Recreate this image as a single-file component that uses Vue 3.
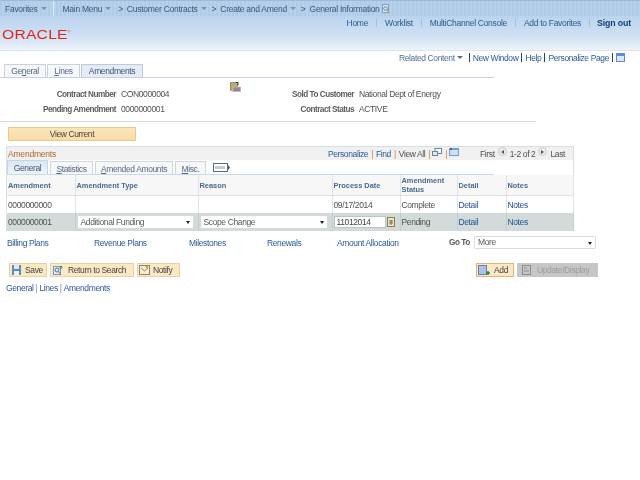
<script setup>
const menu = [
  { label: 'Main Menu', arrow: false },
  { label: 'Customer Contracts', arrow: true },
  { label: 'Create and Amend', arrow: true }
]
const topLinks = ['Home', 'Worklist', 'MultiChannel Console', 'Add to Favorites']
const pageTabs = [
  { pre: 'Ge', key: 'n', post: 'eral', w: 42 },
  { pre: '', key: 'L', post: 'ines', w: 33 },
  { pre: 'Amendments', key: '', post: '', w: 62, active: true }
]
const gridTabs = [
  { pre: 'General', key: '', post: '', w: 41, active: true },
  { pre: '', key: 'S', post: 'tatistics', w: 43 },
  { pre: '', key: 'A', post: 'mended Amounts', w: 78 },
  { pre: '', key: 'M', post: 'isc.', w: 31 }
]
const relatedLinks = ['Billing Plans', 'Revenue Plans', 'Milestones', 'Renewals', 'Amount Allocation']
</script>

<template>
  <div class="page">
    <header class="banner">
      <nav class="crumbs">
        <span class="crumb fav">Favorites<i class="caret"></i></span>
        <span class="crumb-sep"></span>
        <span v-for="m in menu" :key="m.label" class="crumb">
          <span v-if="m.arrow" class="gt">&gt;</span>{{ m.label }}<i class="caret"></i>
        </span>
        <span class="crumb last"><span class="gt">&gt;</span>General Information</span>
        <svg class="crumb-icon" width="8" height="10" viewBox="0 0 8 10">
          <rect x="0.5" y="0.5" width="6" height="8" fill="#dfe9f5" stroke="#7f9fc4" />
          <circle cx="3.5" cy="4.5" r="1.8" fill="none" stroke="#5f7fa8" />
          <path d="M5 6 L7.5 9.5" stroke="#c8a038" stroke-width="1.2" />
        </svg>
      </nav>
      <div class="toplinks">
        <template v-for="l in topLinks" :key="l">
          <a class="toplink">{{ l }}</a>
          <span class="top-sep"></span>
        </template>
        <a class="toplink signout">Sign out</a>
      </div>
      <div class="logo">ORACLE<sup>®</sup></div>
    </header>

    <div class="actions">
      <span class="related">Related Content<i class="caret dark"></i></span>
      <span class="pipe first"></span><a>New Window</a>
      <span class="pipe"></span><a>Help</a>
      <span class="pipe"></span><a>Personalize Page</a>
      <span class="pipe"></span>
      <svg width="9" height="9" viewBox="0 0 9 9" class="cal">
        <rect width="9" height="9" fill="#5b8fd0" />
        <rect x="1" y="3" width="7" height="5" fill="#dbe7f5" />
      </svg>
    </div>

    <div class="tabs page-tabs">
      <span v-for="t in pageTabs" :key="t.post + t.pre" class="tab" :class="{ active: t.active }" :style="{ width: t.w + 'px' }">{{ t.pre }}<u v-if="t.key">{{ t.key }}</u>{{ t.post }}</span>
    </div>

    <section class="summary">
      <div class="summary-row">
        <label class="lbl l1">Contract Number</label><span class="val v1">CON0000004</span>
        <span class="slot">
          <svg class="doc-icon" width="11" height="10" viewBox="0 0 11 10">
            <rect x="0.3" y="0.3" width="7" height="8" fill="#b7ad70" stroke="#77714a" stroke-width="0.6" />
            <rect x="3" y="5" width="7.7" height="4.7" fill="#8c8c8c" stroke="#ecaab6" stroke-width="0.8" />
            <path d="M6 0.5 h2 v3" fill="none" stroke="#333" />
          </svg>
        </span>
        <label class="lbl l2">Sold To Customer</label><span class="val">National Dept of Energy</span>
      </div>
      <div class="summary-row">
        <label class="lbl l1">Pending Amendment</label><span class="val v1">0000000001</span>
        <span class="slot"></span>
        <label class="lbl l2">Contract Status</label><span class="val">ACTIVE</span>
      </div>
    </section>

    <div class="rule"></div>

    <button class="view-current">View Current</button>

    <section class="grid-box">
      <div class="grid-head">
        <span class="grid-title">Amendments</span>
        <div class="grid-nav">
          <a>Personalize</a><span class="or">|</span><a>Find</a><span class="or">|</span><span class="muted">View All</span><span class="or">|</span>
          <svg width="10" height="8" viewBox="0 0 10 8" class="mini">
            <rect x="3" y="0.5" width="6.5" height="5" fill="#fff" stroke="#6f8296" />
            <rect x="0.5" y="3.5" width="5" height="4" fill="#dfe8f1" stroke="#6f8296" />
          </svg>
          <span class="or">|</span>
          <svg width="10" height="8" viewBox="0 0 10 8" class="mini">
            <rect width="10" height="8" fill="#6aa2db" />
            <rect x="1" y="2" width="8" height="5" fill="#cfe0f2" />
            <rect x="1" y="0" width="2" height="2" fill="#c0392b" />
          </svg>
          <span class="first-last f">First</span>
          <span class="round"><i class="tri left"></i></span>
          <span class="muted">1-2 of 2</span>
          <span class="round"><i class="tri right"></i></span>
          <span class="first-last">Last</span>
        </div>
      </div>

      <div class="grid-tabs">
        <span v-for="t in gridTabs" :key="t.post + t.pre" class="gtab" :class="{ active: t.active }" :style="{ width: t.w + 'px' }">{{ t.pre }}<u v-if="t.key">{{ t.key }}</u>{{ t.post }}</span>
        <svg class="show-all" width="17" height="9" viewBox="0 0 17 9">
          <rect x="0.5" y="0.5" width="14" height="8" fill="#fff" stroke="#5b6b80" />
          <path d="M3 3v3M5 3v3M7 3v3M9 3v3M11 3v3" stroke="#8a97a8" />
          <path d="M15 2 L17 4.5 L15 7z" fill="#44556b" />
        </svg>
      </div>

      <table class="grid">
        <colgroup>
          <col style="width: 68px" /><col style="width: 123px" /><col style="width: 134px" />
          <col style="width: 68px" /><col style="width: 57px" /><col style="width: 49px" /><col style="width: 67px" />
        </colgroup>
        <thead>
          <tr>
            <th>Amendment</th><th>Amendment Type</th><th>Reason</th><th>Process Date</th><th>Amendment<br />Status</th><th>Detail</th><th>Notes</th>
          </tr>
        </thead>
        <tbody>
          <tr class="odd">
            <td>0000000000</td><td></td><td></td><td>09/17/2014</td><td>Complete</td><td class="link">Detail</td><td class="link">Notes</td>
          </tr>
          <tr class="even">
            <td>0000000001</td>
            <td><span class="select w115">Additional Funding<i class="drop"></i></span></td>
            <td><span class="select w126">Scope Change<i class="drop"></i></span></td>
            <td>
              <div class="date-cell">
                <span class="date-input">11012014</span>
                <svg width="8" height="10" viewBox="0 0 8 10">
                  <rect x="0.5" y="0.5" width="7" height="9" fill="#efe3b8" stroke="#8b7f4f" />
                  <path d="M2 4h4M2 6h4M4 3v5" stroke="#5d5d5d" stroke-width="0.8" />
                </svg>
              </div>
            </td>
            <td>Pending</td><td class="link">Detail</td><td class="link">Notes</td>
          </tr>
        </tbody>
      </table>
    </section>

    <div class="related-row">
      <a v-for="l in relatedLinks" :key="l" class="rel-link">{{ l }}</a>
      <label class="goto">Go To</label>
      <span class="select more">More<i class="drop"></i></span>
    </div>

    <div class="toolbar">
      <button class="btn b-save">
        <svg width="9" height="10" viewBox="0 0 9 10">
          <rect width="9" height="10" fill="#5b8bc9" />
          <rect x="2" y="0" width="5" height="4" fill="#dfe9f5" />
          <rect x="2" y="6" width="5" height="4" fill="#eef3f9" />
        </svg>
        Save
      </button>
      <button class="btn b-return">
        <svg width="12" height="11" viewBox="0 0 12 11">
          <rect x="0.5" y="1.5" width="7" height="8" fill="#e5edf6" stroke="#7c99bd" />
          <circle cx="4" cy="5" r="2" fill="none" stroke="#4f6f99" />
          <path d="M5.5 6.5 L8 10" stroke="#777" />
          <path d="M8 4 V1 M6.5 2.5 L8 1 L9.5 2.5" fill="none" stroke="#2f8a3a" />
        </svg>
        Return to Search
      </button>
      <button class="btn b-notify">
        <svg width="11" height="10" viewBox="0 0 11 10">
          <rect x="0.5" y="0.5" width="10" height="9" fill="#f7efd8" stroke="#8d8360" />
          <path d="M2 3l3.5 3L9 3" fill="none" stroke="#8d8360" />
          <rect x="7" y="1" width="2" height="2" fill="#c9a13a" />
        </svg>
        Notify
      </button>
      <span class="spacer"></span>
      <button class="btn b-add">
        <svg width="13" height="11" viewBox="0 0 13 11">
          <rect x="0.5" y="0.5" width="8" height="9" fill="#a9c3e3" stroke="#5b84b8" />
          <path d="M10 6v4M8 8h4" stroke="#1f8a2c" stroke-width="1.4" />
        </svg>
        Add
      </button>
      <button class="btn b-update">
        <svg width="9" height="10" viewBox="0 0 9 10">
          <rect x="0.5" y="0.5" width="8" height="9" fill="none" stroke="#8d8d8d" />
          <path d="M2 3h3M2 6h5" stroke="#8d8d8d" />
        </svg>
        Update/Display
      </button>
    </div>

    <div class="footer-links">
      <a>General</a><span class="bar">|</span><a>Lines</a><span class="bar">|</span><a>Amendments</a>
    </div>
  </div>
</template>

<style scoped>
.page {
  width: 640px;
  height: 480px;
  overflow: hidden;
  background: #fff;
  font-family: "Liberation Sans", Arial, sans-serif;
  font-size: 8.5px;
  letter-spacing: -0.38px;
  color: #505050;
  filter: blur(0.3px);
}

a { color: #2a5a9e; }

.banner {
  position: relative;
  height: 50px;
  border-bottom: 1px solid #dfe3ea;
  background: linear-gradient(#b7d2ec 0, #b7d2ec 14px, #c1d8f0 22px, #cfe0f3 36px, #edf3fa 50px);
}

.crumbs {
  box-sizing: border-box;
  height: 16px;
  display: flex;
  align-items: center;
  padding-left: 5px;
  letter-spacing: -0.27px;
  color: #3d5773;
  background: repeating-linear-gradient(90deg, #aecbe8 0, #aecbe8 2px, #b6d1ec 2px, #b6d1ec 4px);
  border-top: 1px solid #9dbbd9;
}

.crumb { display: flex; align-items: center; white-space: nowrap; margin-right: 7px; }
.fav { margin-right: 6px; }
.crumb:nth-child(4), .crumb:nth-child(5) { margin-right: 5px; }
.crumb.last { margin-right: 2px; }
.crumb-sep { width: 1px; height: 15px; background: #e2edf8; margin: 0 9px 0 0; }
.gt { margin-right: 4px; }

.caret {
  display: inline-block;
  margin-left: 3px;
  border-left: 3px solid transparent;
  border-right: 3px solid transparent;
  border-top: 3px solid #7d93ab;
}
.caret.dark { border-top-color: #5a6a7c; margin-left: 2px; }

.toplinks {
  display: flex;
  justify-content: flex-end;
  align-items: center;
  height: 13px;
  padding-right: 9px;
  letter-spacing: -0.3px;
}
.toplink { color: #2a5a8e; white-space: nowrap; }
.top-sep { width: 1px; height: 9px; background: #a9c0d8; margin: 0 8px; }
.signout { margin-left: -1px; font-weight: bold; color: #153f78; font-size: 8.8px; letter-spacing: -0.15px; }

.logo {
  position: absolute;
  left: 2px;
  top: 25px;
  font-size: 12.5px;
  line-height: 14px;
  letter-spacing: 0.2px;
  color: #e2231a;
  transform: scaleX(1.25);
  transform-origin: left center;
}
.logo sup { font-size: 3px; vertical-align: 6px; }

.actions {
  display: flex;
  align-items: center;
  justify-content: flex-end;
  height: 13px;
  padding-right: 15px;
}
.actions a { color: #2a5a9e; }
.related { color: #4f6f96; display: flex; align-items: center; }
.pipe { width: 1px; height: 9px; background: #24456f; margin: 0 3px; }
.pipe.first { margin-left: 6px; }

.tabs { display: flex; }
.page-tabs {
  width: 490px;
  height: 13px;
  padding-left: 4px;
  gap: 1px;
  border-bottom: 1px solid #c5d1e0;
}

.tab {
  display: flex;
  align-items: center;
  justify-content: center;
  box-sizing: border-box;
  height: 13px;
  color: #55688a;
  background: #f6f7f9;
  border: 1px solid #c9d1dc;
  border-bottom: none;
}
.tab.active {
  background: #e6ecf5;
  color: #3c5577;
  border-color: #bccadb;
}

.summary { padding-top: 8px; }
.summary-row {
  display: flex;
  align-items: baseline;
  box-sizing: border-box;
  height: 15px;
  padding-top: 3px;
}
.lbl {
  font-size: 8.2px;
  font-weight: bold;
  letter-spacing: -0.5px;
  color: #5c5c5c;
  text-align: right;
  white-space: nowrap;
}
.l1 { width: 116px; }
.l2 { width: 113px; }
.val { margin-left: 5px; white-space: nowrap; }
.v1 { width: 59px; }
.slot { width: 61px; height: 10px; align-self: flex-start; }
.doc-icon { display: block; margin: -7px 0 0 50px; }

.rule {
  width: 536px;
  height: 1px;
  margin-top: 5px;
  background: #dcdcdc;
}

.view-current {
  display: block;
  width: 128px;
  height: 14px;
  margin: 5px 0 0 8px;
  padding: 0;
  font: 8.5px "Liberation Sans", Arial, sans-serif;
  letter-spacing: -0.38px;
  color: #444;
  background: linear-gradient(#fbe5bb, #f8dca6);
  border: 1px solid #ecc98b;
}

.grid-box {
  width: 566px;
  margin: 5px 0 0 6px;
  border: 1px solid #d7dfe7;
  border-bottom: none;
}

.grid-head {
  display: flex;
  align-items: center;
  justify-content: space-between;
  height: 13px;
  padding: 0 8px 0 1px;
  background: #f0f0f0;
}
.grid-title { color: #b4672a; letter-spacing: -0.2px; }
.grid-nav { display: flex; align-items: center; gap: 2px; }
.grid-nav a { color: #2a5a9e; }
.or { color: #c9843e; margin: 0 1px; }
.mini { margin: -4px 0 0 -1px; }
.first-last.f { margin-left: 19px; }

.round {
  display: inline-flex;
  align-items: center;
  justify-content: center;
  width: 9px;
  height: 9px;
  margin: -4px 1px 0;
  border-radius: 50%;
  background: radial-gradient(#f4f4f4 20%, #bdbdbd);
}
.tri { width: 0; height: 0; border-top: 2px solid transparent; border-bottom: 2px solid transparent; }
.tri.left { border-right: 3px solid #555; }
.tri.right { border-left: 3px solid #555; }

.grid-tabs {
  display: flex;
  align-items: flex-end;
  height: 14px;
  gap: 2px;
  border-bottom: 1px solid #c7d9ee;
  margin-right: 79px;
}
.gtab {
  display: flex;
  align-items: center;
  justify-content: center;
  box-sizing: border-box;
  height: 13px;
  padding-top: 1px;
  color: #55688a;
  background: #f7f7f7;
  border: 1px solid #d0d6de;
  border-bottom: none;
}
.gtab.active {
  height: 14px;
  color: #3c5577;
  background: linear-gradient(#dbe7f4, #eef3f9);
  border-color: #c5d5e8;
}
.show-all { margin: 0 0 2px 5px; }

.grid {
  width: 566px;
  table-layout: fixed;
  border-collapse: collapse;
}
.grid th {
  height: 20px;
  padding: 0 1px;
  font-size: 7.4px;
  letter-spacing: 0;
  line-height: 9px;
  text-align: left;
  font-weight: bold;
  color: #4a6a90;
  background: #f7f7f7;
  border-right: 1px solid #dfe3e8;
  border-bottom: 1px solid #dfe3e8;
}
.grid td {
  padding: 0 1px;
  white-space: nowrap;
  border-right: 1px solid #dfe3e8;
}
.odd td { height: 17px; background: #fff; }
.even td { height: 18px; background: #d2dbd9; border-right-color: #c4cecc; }
.grid td.link { color: #1f5199; }

.select {
  position: relative;
  display: inline-flex;
  align-items: center;
  box-sizing: border-box;
  height: 12px;
  padding-left: 3px;
  background: #fff;
  border-radius: 1px;
  color: #5a5a5a;
}
.w115 { width: 115px; margin-left: 1px; }
.w126 { width: 126px; margin-left: 1px; }
.drop {
  position: absolute;
  right: 3px;
  top: 5px;
  border-left: 2.5px solid transparent;
  border-right: 2.5px solid transparent;
  border-top: 3px solid #222;
}

.date-cell { display: flex; align-items: center; gap: 1px; }
.date-input {
  box-sizing: border-box;
  width: 52px;
  height: 12px;
  line-height: 11px;
  padding-left: 2px;
  background: #fff;
  border: 1px solid #b9c4cc;
  color: #444;
}

.related-row {
  display: flex;
  align-items: center;
  height: 14px;
  margin-top: 4px;
  padding-left: 7px;
}
.rel-link { color: #2a5a9e; white-space: nowrap; padding-top: 1px; }
.rel-link:nth-child(1) { width: 87px; }
.rel-link:nth-child(2) { width: 95px; }
.rel-link:nth-child(3) { width: 78px; }
.rel-link:nth-child(4) { width: 70px; }
.rel-link:nth-child(5) { width: 112px; }
.goto { font-size: 8.2px; font-weight: bold; color: #5c5c5c; width: 25px; padding-top: 1px; letter-spacing: -0.45px; }
.select.more {
  width: 122px;
  height: 13px;
  border: 1px solid #d8dde3;
}

.toolbar {
  display: flex;
  align-items: center;
  height: 14px;
  margin-top: 14px;
  padding-left: 9px;
  gap: 3px;
}
.spacer { width: 290px; }
.btn {
  display: flex;
  align-items: center;
  box-sizing: border-box;
  height: 14px;
  padding: 0;
  font: 8.5px "Liberation Sans", Arial, sans-serif;
  letter-spacing: -0.38px;
  color: #444;
  background: #fbe8c4;
  border: 1px solid #f0cf9c;
  white-space: nowrap;
}
.b-save { width: 38px; padding-left: 2px; gap: 4px; }
.b-return { width: 84px; padding-left: 2px; gap: 3px; }
.b-notify { width: 43px; padding-left: 1px; gap: 3px; }
.b-add { width: 38px; padding-left: 1px; gap: 3px; border-color: #eeb06a; }
.b-update { width: 81px; padding-left: 4px; gap: 6px; background: #c6c6c6; border-color: #c6c6c6; color: #9c9c9c; }

.footer-links {
  margin-top: 6px;
  padding-left: 6px;
  line-height: 11px;
}
.footer-links a { color: #2a5a9e; }
.bar { margin: 0 2px; color: #7a8da5; }
</style>

<style>
html, body { margin: 0; background: #fff; }
</style>
